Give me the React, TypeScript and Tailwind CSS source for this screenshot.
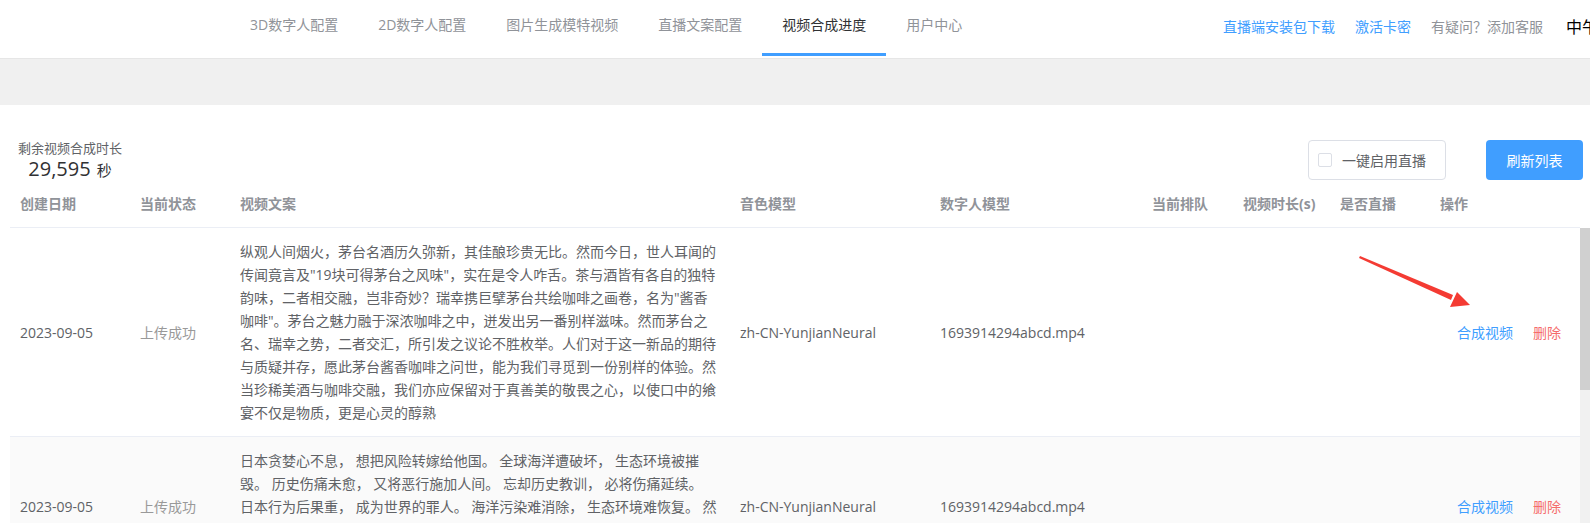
import React from "react";

const navItems = ["3D数字人配置", "2D数字人配置", "图片生成模特视频", "直播文案配置", "视频合成进度", "用户中心"];

const row1 = [
  "纵观人间烟火，茅台名酒历久弥新，其佳酿珍贵无比。然而今日，世人耳闻的",
  "传闻竟言及\"19块可得茅台之风味\"，实在是令人咋舌。茶与酒皆有各自的独特",
  "韵味，二者相交融，岂非奇妙？瑞幸携巨擘茅台共绘咖啡之画卷，名为\"酱香",
  "咖啡\"。茅台之魅力融于深浓咖啡之中，迸发出另一番别样滋味。然而茅台之",
  "名、瑞幸之势，二者交汇，所引发之议论不胜枚举。人们对于这一新品的期待",
  "与质疑并存，愿此茅台酱香咖啡之问世，能为我们寻觅到一份别样的体验。然",
  "当珍稀美酒与咖啡交融，我们亦应保留对于真善美的敬畏之心，以使口中的飨",
  "宴不仅是物质，更是心灵的醇熟",
];

const row2 = [
  "日本贪婪心不息， 想把风险转嫁给他国。 全球海洋遭破坏， 生态环境被摧",
  "毁。 历史伤痛未愈， 又将恶行施加人间。 忘却历史教训， 必将伤痛延续。",
  "日本行为后果重， 成为世界的罪人。 海洋污染难消除， 生态环境难恢复。 然",
  "而一意孤行者， 终将自食其果。 世界人民齐发声， 坚决反对核污水排海。",
  "守护蓝色家园， 人人有责。",
];

const headers = ["创建日期", "当前状态", "视频文案", "音色模型", "数字人模型", "当前排队", "视频时长(s)", "是否直播", "操作"];

function Row({ lines, striped }: { lines: string[]; striped?: boolean }) {
  return (
    <tr className={`border-b border-[#ebeef5] ${striped ? "bg-[#fafafa]" : "bg-white"}`}>
      <td className="px-[10px] py-[12px] align-middle text-[#606266] leading-[23px]">2023-09-05</td>
      <td className="px-[10px] py-[12px] align-middle text-[#999999] leading-[23px]">上传成功</td>
      <td className="px-[10px] py-[12px] align-middle text-[#606266] leading-[23px]">
        {lines.map((l, i) => (
          <div key={i} className="h-[23px] whitespace-nowrap">{l}</div>
        ))}
      </td>
      <td className="px-[10px] py-[12px] align-middle text-[#606266] leading-[23px]">zh-CN-YunjianNeural</td>
      <td className="px-[10px] py-[12px] align-middle text-[#606266] leading-[23px]">1693914294abcd.mp4</td>
      <td className="px-[10px] py-[12px]"></td>
      <td className="px-[10px] py-[12px]"></td>
      <td className="px-[10px] py-[12px]"></td>
      <td className="pl-[27px] pr-[10px] py-[12px] align-middle leading-[23px] whitespace-nowrap">
        <span className="text-[#409eff]">合成视频</span>
        <span className="ml-[20px] text-[#f56c6c]">删除</span>
      </td>
    </tr>
  );
}

export default function App() {
  return (
    <div className="relative w-[1590px] h-[523px] overflow-hidden bg-white text-[14px] font-['Open_Sans','Noto_Sans_CJK_SC',sans-serif]">
      {/* Header */}
      <div className="flex h-[59px] border-b border-[#e6e6e6] bg-white">
        <div className="flex w-[1223px] shrink-0 pl-[230px]">
          {navItems.map((n) => {
            const active = n === "视频合成进度";
            return (
              <div
                key={n}
                className={`h-[56px] px-[20px] pt-[15px] leading-[20px] whitespace-nowrap border-b-[3px] ${
                  active ? "border-[#409eff] text-[#303133]" : "border-transparent text-[#909399]"
                }`}
              >
                {n}
              </div>
            );
          })}
        </div>
        <div className="flex shrink-0 items-start gap-[20px] pt-[17px] leading-[20px] whitespace-nowrap">
          <span className="text-[#409eff]">直播端安装包下载</span>
          <span className="text-[#409eff]">激活卡密</span>
          <span className="text-[#909399]">有疑问？添加客服</span>
          <span className="ml-[3px] text-[16px] text-black">中午好，用户</span>
        </div>
      </div>

      {/* Gray band */}
      <div className="h-[46px] bg-[#f0f0f0]"></div>

      {/* Toolbar */}
      <div className="flex h-[75px] justify-between">
        <div className="flex flex-col items-center pl-[18px] pt-[35px]">
          <div className="text-[13px] leading-[16px] text-[#606266]">剩余视频合成时长</div>
          <div className="flex items-baseline leading-[26px] text-[#303133]">
            <span className="text-[20px]">29,595</span>
            <span className="ml-[6px] text-[15px]">秒</span>
          </div>
        </div>
        <div className="flex items-start gap-[40px] pr-[7px] pt-[35px]">
          <div className="flex h-[40px] items-center rounded-[4px] border border-[#dcdfe6] pl-[9px] pr-[19px]">
            <span className="h-[14px] w-[14px] rounded-[2px] border border-[#dcdfe6] bg-white"></span>
            <span className="ml-[10px] text-[#606266]">一键启用直播</span>
          </div>
          <div className="flex h-[40px] w-[97px] items-center justify-center rounded-[4px] bg-[#409eff] text-white">
            刷新列表
          </div>
        </div>
      </div>

      {/* Table */}
      <div className="flex items-start pl-[10px]">
        <table className="w-[1570px] shrink-0 table-fixed border-collapse text-left">
          <colgroup>
            <col className="w-[120px]" />
            <col className="w-[100px]" />
            <col className="w-[500px]" />
            <col className="w-[200px]" />
            <col className="w-[212px]" />
            <col className="w-[91px]" />
            <col className="w-[97px]" />
            <col className="w-[100px]" />
            <col className="w-[150px]" />
          </colgroup>
          <thead>
            <tr className="border-b border-[#ebeef5]">
              {headers.map((h) => (
                <th key={h} className="px-[10px] py-[12px] font-bold leading-[23px] text-[#909399] whitespace-nowrap">
                  {h}
                </th>
              ))}
            </tr>
          </thead>
          <tbody>
            <Row lines={row1} />
            <Row lines={row2} striped />
          </tbody>
        </table>
        <div className="mt-[48px] flex h-[300px] w-[10px] shrink-0 flex-col bg-[#f1f1f1]">
          <div className="h-[162px] w-full bg-[#d0d0d0]"></div>
        </div>
      </div>

      {/* Red annotation arrow */}
      <svg className="absolute left-[1350px] top-[248px]" width="130" height="70" viewBox="0 0 130 70">
        <polygon points="10,8 103,47 101,52 9,10" fill="#f43b33" />
        <polygon points="120,57 107,44 100,59" fill="#f43b33" />
      </svg>
    </div>
  );
}
